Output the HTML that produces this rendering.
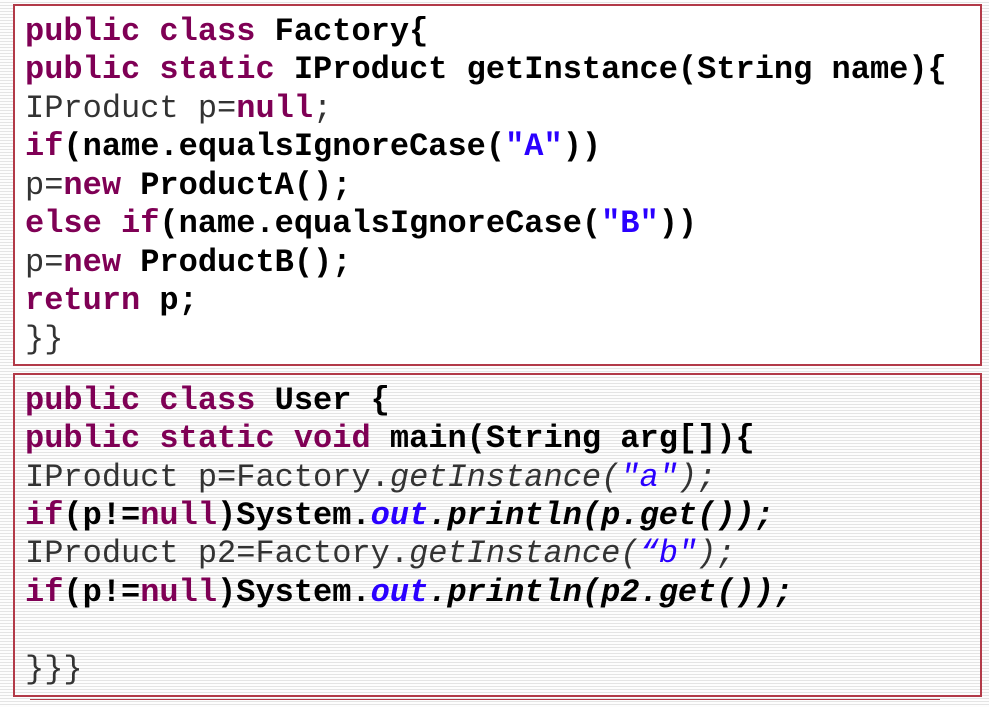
<!DOCTYPE html>
<html><head><meta charset="utf-8"><style>
html,body{margin:0;padding:0;}
body{width:989px;height:707px;position:relative;overflow:hidden;
background:repeating-linear-gradient(to bottom,#fdfdfd 0px,#fdfdfd 2px,#e4e4e4 2px,#e4e4e4 3px);
font-family:"Liberation Mono","Courier New",monospace;font-size:32px;}
.box{position:absolute;left:13px;width:969px;border:2px solid #b23a48;box-sizing:border-box;}
#b1{top:4px;height:362px;background:#fff;}
#b2{top:373px;height:324px;}
.l{position:absolute;left:10px;white-space:pre;line-height:38px;color:#333;}
.k{color:#7f0055;font-weight:bold;}
.b{font-weight:bold;color:#000;}
.s{color:#2a00ff;font-weight:bold;}
.i{font-style:italic;}
.si{color:#2a00ff;font-style:italic;}
.bi{font-style:italic;font-weight:bold;color:#000;}
#line{position:absolute;left:30px;top:699px;width:910px;height:1px;background:#b23a48;}
</style></head><body>
<div class="box" id="b1">
<div class="l" style="top:7px"><span class="k">public class</span> <span class="b">Factory{</span></div>
<div class="l" style="top:45px"><span class="k">public static</span> <span class="b">IProduct getInstance(String name){</span></div>
<div class="l" style="top:84px">IProduct p=<span class="k">null</span>;</div>
<div class="l" style="top:122px"><span class="k">if</span><span class="b">(name.equalsIgnoreCase(</span><span class="s">"A"</span><span class="b">))</span></div>
<div class="l" style="top:161px">p=<span class="k">new</span> <span class="b">ProductA();</span></div>
<div class="l" style="top:199px"><span class="k">else if</span><span class="b">(name.equalsIgnoreCase(</span><span class="s">"B"</span><span class="b">))</span></div>
<div class="l" style="top:238px">p=<span class="k">new</span> <span class="b">ProductB();</span></div>
<div class="l" style="top:276px"><span class="k">return</span> <span class="b">p;</span></div>
<div class="l" style="top:315px">}}</div>
</div>
<div class="box" id="b2">
<div class="l" style="top:7px"><span class="k">public class</span> <span class="b">User {</span></div>
<div class="l" style="top:45px"><span class="k">public static void</span> <span class="b">main(String arg[]){</span></div>
<div class="l" style="top:84px">IProduct p=Factory.<span class="i">getInstance(</span><span class="si">"a"</span><span class="i">);</span></div>
<div class="l" style="top:122px"><span class="k">if</span><span class="b">(p!=</span><span class="k">null</span><span class="b">)System.</span><span class="si" style="font-weight:bold">out</span><span class="bi">.println(p.get());</span></div>
<div class="l" style="top:160px">IProduct p2=Factory.<span class="i">getInstance(</span><span class="si">“b"</span><span class="i">);</span></div>
<div class="l" style="top:199px"><span class="k">if</span><span class="b">(p!=</span><span class="k">null</span><span class="b">)System.</span><span class="si" style="font-weight:bold">out</span><span class="bi">.println(p2.get());</span></div>
<div class="l" style="top:276px">}}}</div>
</div>
<div id="line"></div>
</body></html>
